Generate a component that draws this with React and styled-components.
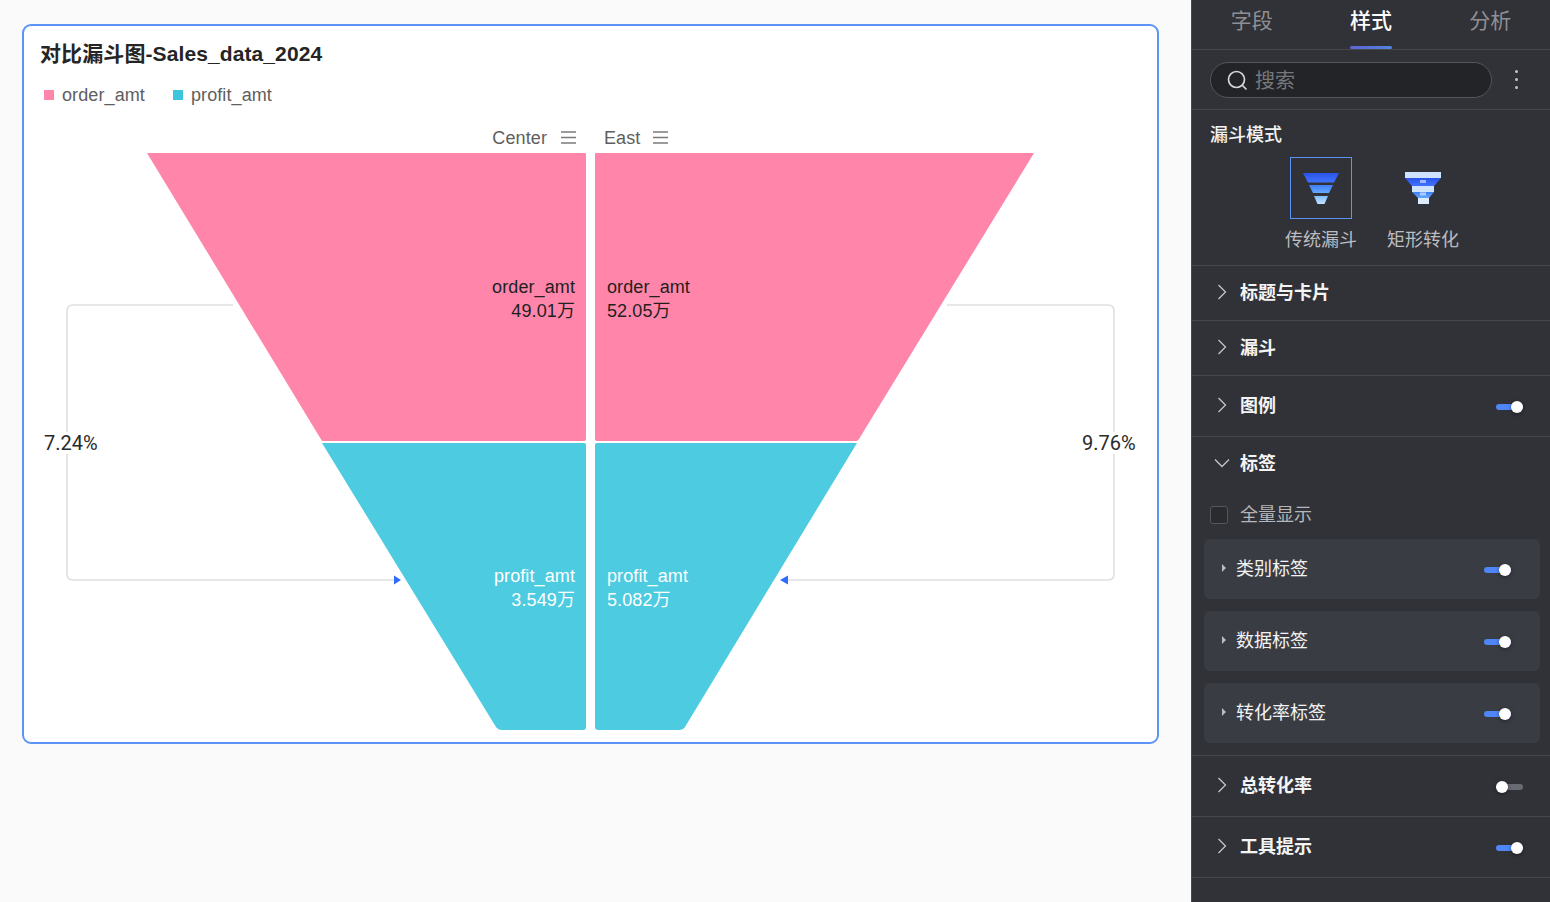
import React from 'react';
import styled, {createGlobalStyle} from 'styled-components';

const cjk = `"Liberation Sans", "Noto Sans CJK SC", sans-serif`;

const GlobalStyle = createGlobalStyle`
    html, body {
        margin: 0;
        padding: 0;
        background: #fafafa;
    }
    * {
        box-sizing: border-box;
    }
`;

const Page = styled.div`
    width: 1550px;
    height: 902px;
    display: flex;
    overflow: hidden;
    font-family: ${cjk};
`;

const Main = styled.main`
    width: 1191px;
    padding: 24px 32px 0 22px;
    background: #fafafa;
`;

const Card = styled.section`
    width: 1137px;
    height: 720px;
    background: #fff;
    border: 2px solid #5b93f7;
    border-radius: 9px;
    display: flex;
    flex-direction: column;
    overflow: hidden;
`;

const Title = styled.h1`
    margin: 15px 0 0 16px;
    font-size: 21px;
    line-height: 26px;
    font-weight: 700;
    letter-spacing: 0.1px;
    color: #252525;
`;

const Legend = styled.div`
    display: flex;
    gap: 28px;
    margin: 16px 0 0 20px;
`;

const LegendItem = styled.div`
    display: flex;
    align-items: center;
    gap: 8px;
    font-size: 18px;
    line-height: 24px;
    letter-spacing: 0.1px;
    color: #5e5e5e;
`;

const Swatch = styled.span`
    width: 10px;
    height: 10px;
    background: ${({color}) => color};
`;

const ChartSvg = styled.svg`
    display: block;
    flex: none;
    margin-top: 15px;
    width: 1133px;
    height: 620px;
`;

const Sidebar = styled.aside`
    width: 359px;
    background: #313237;
    border-left: 1px solid #4a4b50;
    color: #f2f2f2;
`;

const Tabs = styled.nav`
    height: 50px;
    display: flex;
    border-bottom: 1px solid #47484d;
`;

const Tab = styled.div`
    position: relative;
    flex: 1;
    text-align: center;
    font-size: 21px;
    line-height: 41px;
    font-weight: ${({$active}) => ($active ? 500 : 400)};
    color: ${({$active}) => ($active ? '#fff' : '#8f9094')};
    ${({$active}) =>
        $active &&
        `&::after {
            content: '';
            position: absolute;
            left: 50%;
            bottom: 0;
            width: 42px;
            height: 3px;
            margin-left: -21px;
            border-radius: 2px;
            background: linear-gradient(90deg, #5f63cf, #4f86de);
        }`}
`;

const SearchRow = styled.div`
    height: 60px;
    display: flex;
    align-items: center;
    gap: 23px;
    padding: 0 0 0 18px;
    border-bottom: 1px solid #47484d;
`;

const SearchBox = styled.div`
    width: 282px;
    height: 36px;
    display: flex;
    align-items: center;
    gap: 7px;
    padding-left: 15px;
    background: #232428;
    border: 1px solid #54555a;
    border-radius: 18px;
    font-size: 20px;
    color: #77787c;
`;

const Dots = styled.div`
    display: flex;
    flex-direction: column;
    gap: 5px;
    span {
        width: 3px;
        height: 3px;
        border-radius: 50%;
        background: #c4c4c6;
    }
`;

const ModeSection = styled.div`
    height: 156px;
    padding: 13px 0 0 18px;
    border-bottom: 1px solid #47484d;
`;

const SectionTitle = styled.div`
    font-size: 18px;
    line-height: 24px;
    font-weight: 500;
    color: #f2f2f2;
`;

const ModeList = styled.div`
    display: flex;
    gap: 30px;
    margin: 10px 0 0 75px;
`;

const Mode = styled.div`
    width: 72px;
    display: flex;
    flex-direction: column;
    align-items: center;
    font-size: 18px;
    line-height: 24px;
    color: #bcbdc0;
`;

const ModeIcon = styled.div`
    width: 62px;
    height: 62px;
    display: flex;
    align-items: center;
    justify-content: center;
    margin-bottom: 9px;
    border: 1px solid ${({$active}) => ($active ? '#5b93f7' : 'transparent')};
`;

const Row = styled.div`
    height: ${({$height}) => $height}px;
    display: flex;
    align-items: center;
    padding: 0 27px 0 22px;
    ${({$noBorder}) => !$noBorder && 'border-bottom: 1px solid #47484d;'}
`;

const RowLabel = styled.div`
    flex: 1;
    margin: 0 0 4px 10px;
    font-size: 18px;
    font-weight: 700;
    color: #f4f4f4;
`;

const Arrow = styled.svg`
    width: 16px;
    height: 16px;
    margin-bottom: 2px;
    fill: none;
    stroke: #c4c5c8;
    stroke-width: 1.3;
`;

const Check = styled.div`
    height: 49px;
    display: flex;
    align-items: center;
    gap: 12px;
    padding-left: 18px;
    font-size: 18px;
    color: #b5b6b9;
`;

const CheckText = styled.span`
    margin-bottom: 3px;
`;

const Box = styled.span`
    width: 18px;
    height: 18px;
    background: #2a2b2f;
    border: 1px solid #55565b;
    border-radius: 3px;
`;

const SubList = styled.div`
    display: flex;
    flex-direction: column;
    gap: 12px;
    padding: 0 10px 12px 12px;
    border-bottom: 1px solid #47484d;
`;

const SubCard = styled.div`
    height: 60px;
    display: flex;
    align-items: center;
    padding: 0 29px 0 18px;
    background: #3a3c43;
    border-radius: 6px;
`;

const Caret = styled.span`
    width: 0;
    height: 0;
    margin-bottom: 2px;
    border-left: 4px solid #b9babd;
    border-top: 4px solid transparent;
    border-bottom: 4px solid transparent;
`;

const SubLabel = styled.div`
    flex: 1;
    margin: 0 0 4px 10px;
    font-size: 18px;
    color: #f2f2f2;
`;

const Toggle = styled.span`
    position: relative;
    display: block;
    width: 27px;
    height: 6px;
    margin-top: 2px;
    border-radius: 3px;
    background: ${({$on}) => ($on ? '#4f86f7' : '#696b73')};
    &::after {
        content: '';
        position: absolute;
        top: -3px;
        ${({$on}) => ($on ? 'right: 0;' : 'left: 0;')}
        width: 12px;
        height: 12px;
        border-radius: 50%;
        background: #fff;
        box-shadow: 0 1px 4px rgba(0, 0, 0, 0.4);
    }
`;

const ChartText = styled.text`
    font-family: ${cjk};
    font-size: 18px;
    letter-spacing: 0.1px;
    fill: ${({$fill}) => $fill || '#1f1f1f'};
`;

const RateText = styled.text`
    font-family: Roboto, "Liberation Sans", sans-serif;
    font-size: 20px;
    fill: #2a2a2a;
`;

const MenuGlyph = ({x}) => (
    <g stroke='#7a7a7a' strokeWidth='1.4'>
        <line x1={x} y1='132' x2={x + 15} y2='132' />
        <line x1={x} y1='137.5' x2={x + 15} y2='137.5' />
        <line x1={x} y1='143' x2={x + 15} y2='143' />
    </g>
);

const FunnelChart = () => (
    <ChartSvg viewBox='24 122 1133 620'>
        <path
            d='M233 305H73Q67 305 67 311V574Q67 580 73 580H396M947 305H1108Q1114 305 1114 311V574Q1114 580 1108 580H786'
            fill='none'
            stroke='#dfdfdf'
            strokeWidth='1.6'
        />
        <path d='M394 575.5L401 580L394 584.5Z' fill='#2f6bff' />
        <path d='M788 575.5L780 580L788 584.5Z' fill='#2f6bff' />

        <path d='M147 153H585Q586 153 586 154V439Q586 441 584 441H322Z' fill='#ff85aa' />
        <path d='M596 153H1034L859 439Q858 441 856 441H597Q595 441 595 439V154Q595 153 596 153Z' fill='#ff85aa' />
        <path d='M322 443H584Q586 443 586 445V727Q586 730 583 730H502Q498 730 496 727Z' fill='#4dcbe0' />
        <path d='M597 443H857L685 727Q683 730 679 730H598Q595 730 595 727V445Q595 443 597 443Z' fill='#4dcbe0' />

        <rect x='40' y='432' width='60' height='22' fill='#fff' />
        <rect x='1080' y='432' width='60' height='22' fill='#fff' />
        <RateText x='44' y='450'>7.24%</RateText>
        <RateText x='1082' y='450'>9.76%</RateText>

        <ChartText x='547' y='144' textAnchor='end' $fill='#5e5e5e'>Center</ChartText>
        <MenuGlyph x={561} />
        <ChartText x='604' y='144' $fill='#5e5e5e'>East</ChartText>
        <MenuGlyph x={653} />

        <ChartText x='575' y='293' textAnchor='end'>order_amt</ChartText>
        <ChartText x='575' y='317' textAnchor='end'>49.01万</ChartText>
        <ChartText x='607' y='293'>order_amt</ChartText>
        <ChartText x='607' y='317'>52.05万</ChartText>
        <ChartText x='575' y='582' textAnchor='end' $fill='#fff'>profit_amt</ChartText>
        <ChartText x='575' y='606' textAnchor='end' $fill='#fff'>3.549万</ChartText>
        <ChartText x='607' y='582' $fill='#fff'>profit_amt</ChartText>
        <ChartText x='607' y='606' $fill='#fff'>5.082万</ChartText>
    </ChartSvg>
);

const SearchIcon = () => (
    <svg width='22' height='22' viewBox='0 0 22 22' fill='none' stroke='#d6d6d8' strokeWidth='1.7'>
        <circle cx='10.5' cy='10.5' r='8' />
        <path d='M16.5 16.5L20 20' strokeLinecap='round' />
    </svg>
);

const ChevronRight = () => (
    <Arrow viewBox='0 0 16 16'><path d='M4.5 1L11.5 8L4.5 15' /></Arrow>
);

const ChevronDown = () => (
    <Arrow viewBox='0 0 16 16'><path d='M1 4.5L8 11.5L15 4.5' /></Arrow>
);

const ClassicFunnelIcon = () => (
    <svg width='36' height='31' viewBox='0 0 36 31'>
        <defs>
            <linearGradient id='fa' x1='0' y1='0' x2='0' y2='1'>
                <stop offset='0' stopColor='#2a52e8' />
                <stop offset='1' stopColor='#3f74ff' />
            </linearGradient>
            <linearGradient id='fb' x1='0' y1='0' x2='0' y2='1'>
                <stop offset='0' stopColor='#3f7ef5' />
                <stop offset='1' stopColor='#63a8ff' />
            </linearGradient>
            <linearGradient id='fc' x1='0' y1='0' x2='0' y2='1'>
                <stop offset='0' stopColor='#7fbdfd' />
                <stop offset='1' stopColor='#c4e2ff' />
            </linearGradient>
        </defs>
        <path d='M0 0H36L31 9.5H5Z' fill='url(#fa)' />
        <path d='M6 12H30L26 20H10Z' fill='url(#fb)' />
        <path d='M11 23H25L21.5 31H14.5Z' fill='url(#fc)' />
    </svg>
);

const RectFunnelIcon = () => (
    <svg width='36' height='32' viewBox='0 0 36 32'>
        <defs>
            <linearGradient id='ra' x1='0' y1='0' x2='0' y2='1'>
                <stop offset='0' stopColor='#2a52e8' />
                <stop offset='1' stopColor='#3f74ff' />
            </linearGradient>
            <linearGradient id='rb' x1='0' y1='0' x2='0' y2='1'>
                <stop offset='0' stopColor='#3f7ef5' />
                <stop offset='1' stopColor='#63a8ff' />
            </linearGradient>
        </defs>
        <rect x='0' y='0' width='36' height='6' fill='#cfe3ff' />
        <path d='M0 6H36L29 14H7Z' fill='url(#ra)' />
        <rect x='15' y='8' width='6' height='3' fill='#9db9ff' />
        <rect x='7' y='14' width='22' height='6' fill='#cfe3ff' />
        <path d='M7 20H29L24 26H13Z' fill='url(#rb)' />
        <rect x='15' y='20.5' width='6' height='3' fill='#a9d0ff' />
        <rect x='13' y='26' width='11' height='6' fill='#dcecff' />
    </svg>
);

const sections = [
    {name: '标题与卡片', height: 55},
    {name: '漏斗', height: 55},
    {name: '图例', height: 61, on: true},
];

const subCards = ['类别标签', '数据标签', '转化率标签'];

const App = () => (
    <Page>
        <GlobalStyle />
        <Main>
            <Card>
                <Title>对比漏斗图-Sales_data_2024</Title>
                <Legend>
                    <LegendItem><Swatch color='#ff85aa' />order_amt</LegendItem>
                    <LegendItem><Swatch color='#3bc6dc' />profit_amt</LegendItem>
                </Legend>
                <FunnelChart />
            </Card>
        </Main>
        <Sidebar>
            <Tabs>
                <Tab>字段</Tab>
                <Tab $active>样式</Tab>
                <Tab>分析</Tab>
            </Tabs>
            <SearchRow>
                <SearchBox><SearchIcon />搜索</SearchBox>
                <Dots><span /><span /><span /></Dots>
            </SearchRow>
            <ModeSection>
                <SectionTitle>漏斗模式</SectionTitle>
                <ModeList>
                    <Mode>
                        <ModeIcon $active><ClassicFunnelIcon /></ModeIcon>
                        传统漏斗
                    </Mode>
                    <Mode>
                        <ModeIcon><RectFunnelIcon /></ModeIcon>
                        矩形转化
                    </Mode>
                </ModeList>
            </ModeSection>
            {sections.map(section => (
                <Row key={section.name} $height={section.height}>
                    <ChevronRight />
                    <RowLabel>{section.name}</RowLabel>
                    {section.on && <Toggle $on />}
                </Row>
            ))}
            <Row $height={53} $noBorder>
                <ChevronDown />
                <RowLabel>标签</RowLabel>
            </Row>
            <Check><Box /><CheckText>全量显示</CheckText></Check>
            <SubList>
                {subCards.map(name => (
                    <SubCard key={name}>
                        <Caret />
                        <SubLabel>{name}</SubLabel>
                        <Toggle $on />
                    </SubCard>
                ))}
            </SubList>
            <Row $height={61}>
                <ChevronRight />
                <RowLabel>总转化率</RowLabel>
                <Toggle />
            </Row>
            <Row $height={61}>
                <ChevronRight />
                <RowLabel>工具提示</RowLabel>
                <Toggle $on />
            </Row>
        </Sidebar>
    </Page>
);

export default App;
